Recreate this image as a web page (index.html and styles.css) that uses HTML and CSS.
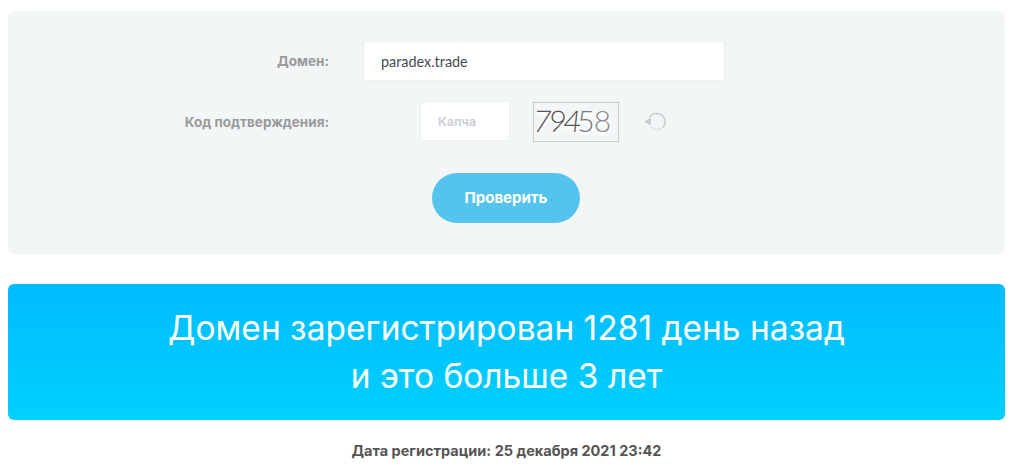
FILE: index.html
```html
<!DOCTYPE html>
<html lang="ru">
<head>
  <meta charset="UTF-8" />
  <meta name="viewport" content="width=device-width, initial-scale=1.0" />
  <title>Возраст домена</title>
  <link rel="stylesheet" href="styles.css">
</head>
<body>
  <form class="check-form">
    <div class="form-row">
      <label class="form-label">Домен:</label>
      <div class="domain-input">paradex.trade</div>
    </div>
    <div class="form-row">
      <label class="form-label">Код подтверждения:</label>
      <div class="captcha-group">
        <div class="captcha-input">Капча</div>
        <div class="captcha-img">
          <span class="d1">7</span><span class="d2">9</span><span class="d3">4</span><span class="d4">5</span><span class="d5">8</span>
        </div>
        <svg class="refresh-icon" width="22" height="20" viewBox="0 0 22 20" fill="none">
          <path d="M5.6 6A8.5 8.5 0 1 1 19.5 15.8" stroke="#c6cbcd" stroke-width="1.5" />
          <path d="M19.5 15.8A8.5 8.5 0 0 1 6.5 15.5" stroke="#c6cbcd" stroke-width="1.6" stroke-dasharray="1.3 1.7" />
          <path d="M0.3 10.8L6.8 6.6L6.8 14.4Z" fill="#c6cbcd" />
        </svg>
      </div>
    </div>
    <button class="submit-btn" type="button">Проверить</button>
  </form>

  <div class="result-box">
    Домен зарегистрирован 1281 день назад<br>
    и это больше 3 лет
  </div>

  <p class="reg-date">Дата регистрации: 25 декабря 2021 23:42</p>
</body>
</html>
```

FILE: styles.css
```css
html, body {
  margin: 0;
  padding: 0;
  background: #fff;
  font-family: "Inter", "Noto Sans", sans-serif;
  overflow: hidden;
}

body {
  padding: 11px 6px 0 8px;
}

.check-form {
  display: flex;
  flex-direction: column;
  height: 243px;
  box-sizing: border-box;
  padding-top: 30px;
  background: #f3f6f7;
  border-radius: 6px;
}

.form-row {
  display: grid;
  grid-template-columns: 321px 362px;
  column-gap: 34px;
  align-items: center;
  height: 40px;
  margin-bottom: 20px;
}

.form-label {
  text-align: right;
  font-size: 13.5px;
  font-weight: 700;
  color: #999;
}

.domain-input {
  display: flex;
  align-items: center;
  box-sizing: border-box;
  height: 40px;
  padding-left: 17px;
  background: #fff;
  border: 1px solid #edf0f1;
  border-radius: 3px;
  font-family: "Lato", "Open Sans", sans-serif;
  font-size: 14.4px;
  color: #444b54;
}

.captcha-group {
  display: flex;
  align-items: flex-start;
  margin-left: 57px;
  width: 320px;
}

.captcha-input {
  display: flex;
  align-items: center;
  box-sizing: border-box;
  width: 90px;
  height: 40px;
  padding-left: 17px;
  background: #fff;
  border: 1px solid #edf0f1;
  border-radius: 3px;
  font-size: 12.3px;
  font-weight: 700;
  color: #ccd0d8;
}

.captcha-img {
  display: flex;
  align-items: center;
  box-sizing: border-box;
  width: 86px;
  height: 40px;
  margin: 1px 0 0 23px;
  border: 1px solid #c9cbcc;
  font-family: "Lato", "Liberation Sans", sans-serif;
  font-size: 30px;
  font-weight: 300;
  color: #555;
  text-shadow: 2px 2px 1px #fff, 1px 3px 1px #fff, -1px 1px 2px #fff;
}

.captcha-img span {
  display: block;
  margin-top: -4px;
}

.captcha-img .d1 { transform: skewX(-8deg); margin-right: -2px; }
.captcha-img .d2 { transform: rotate(8deg); margin-right: -3px; }
.captcha-img .d3 { transform: skewX(-6deg); margin-right: -4px; }
.captcha-img .d4 { margin-right: -1px; color: #777; }
.captcha-img .d5 { color: #888; }

.refresh-icon {
  margin: 10px 0 0 25px;
}

.submit-btn {
  align-self: flex-start;
  width: 148px;
  height: 50px;
  margin: 12px 0 0 424px;
  padding: 0 0 2px;
  background: #54c3ed;
  border: none;
  border-radius: 25px;
  font-family: inherit;
  font-size: 15px;
  font-weight: 700;
  color: #fff;
  cursor: pointer;
}

.result-box {
  margin-top: 30px;
  height: 136px;
  box-sizing: border-box;
  padding-top: 20px;
  background: linear-gradient(#00bcff, #00d0ff);
  border-radius: 6px;
  text-align: center;
  font-size: 33.5px;
  line-height: 48px;
  font-weight: 400;
  color: #fff;
}

.reg-date {
  margin: 22px 0 0;
  text-align: center;
  font-size: 14.5px;
  line-height: 18px;
  font-weight: 700;
  color: #555;
}
```
